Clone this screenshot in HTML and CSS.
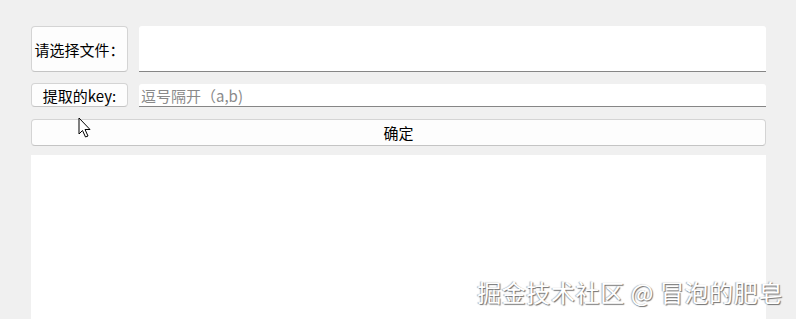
FILE: index.html
```html
<!DOCTYPE html>
<html lang="zh-CN">
<head>
    <meta charset="UTF-8">
    <meta name="viewport" content="width=device-width, initial-scale=1.0">
    <title>提取key</title>
    <link rel="stylesheet" href="styles.css">
</head>
<body>
    <div class="window">
        <div class="row row-file">
            <button class="label-btn" type="button">请选择文件：</button>
            <input class="field" type="text" id="file_path">
        </div>
        <div class="row row-key">
            <button class="label-btn" type="button">提取的key:</button>
            <input class="field" type="text" id="keys" placeholder="逗号隔开（a,b)">
        </div>
        <button class="confirm-btn" type="button">确定</button>
        <div class="output"></div>
    </div>

    <svg class="cursor" width="14" height="22" viewBox="0 0 14 22">
        <path d="M1 1 L1 17 L4.5 13.5 L7.5 20 L10 19 L7 12.5 L12 12.5 Z" fill="#fff" stroke="#000" stroke-width="1" stroke-linejoin="round"/>
    </svg>
    <div class="watermark">掘金技术社区 @ 冒泡的肥皂</div>
</body>
</html>
```

FILE: styles.css
```css
body {
    margin: 0;
    height: 100vh;
    overflow: hidden;
    background-color: #f0f0f0;
    font-family: "Noto Sans CJK SC", "Noto Sans", sans-serif;
    font-size: 15px;
    color: #000;
}
.window {
    display: flex;
    flex-direction: column;
    padding: 26px 30px 0 31px;
    height: 100%;
    box-sizing: border-box;
}
.row {
    display: flex;
    gap: 11px;
}
.row-file {
    height: 46px;
    margin-bottom: 11px;
}
.row-key {
    height: 24px;
    margin-bottom: 12px;
}
.label-btn, .confirm-btn {
    font-family: inherit;
    font-size: 15px;
    color: #000;
    background: #fdfdfd;
    border: 1px solid #d4d4d4;
    border-bottom-color: #c4c4c4;
    border-radius: 4px;
    padding: 0;
    line-height: 1;
}
.label-btn {
    width: 97px;
    flex-shrink: 0;
}
.field {
    flex: 1;
    min-width: 0;
    border: none;
    border-bottom: 1px solid #868686;
    border-radius: 3px 3px 0 0;
    background: #fff;
    font-family: inherit;
    font-size: 15px;
    padding: 0 2px;
    outline: none;
}
.row-key .field {
    margin-top: 1px;
}
.field::placeholder {
    color: #8a8a8a;
}
.confirm-btn {
    height: 27px;
    margin-bottom: 9px;
}
.output {
    flex: 1;
    background: #fff;
}
.cursor {
    position: absolute;
    left: 78px;
    top: 117px;
}
.watermark {
    position: absolute;
    right: 13px;
    top: 274px;
    font-size: 24px;
    color: #fff;
    letter-spacing: 0.6px;
    text-shadow: 1px 1px 1px #707070, -1px 0 1px #b0b0b0;
}
```
